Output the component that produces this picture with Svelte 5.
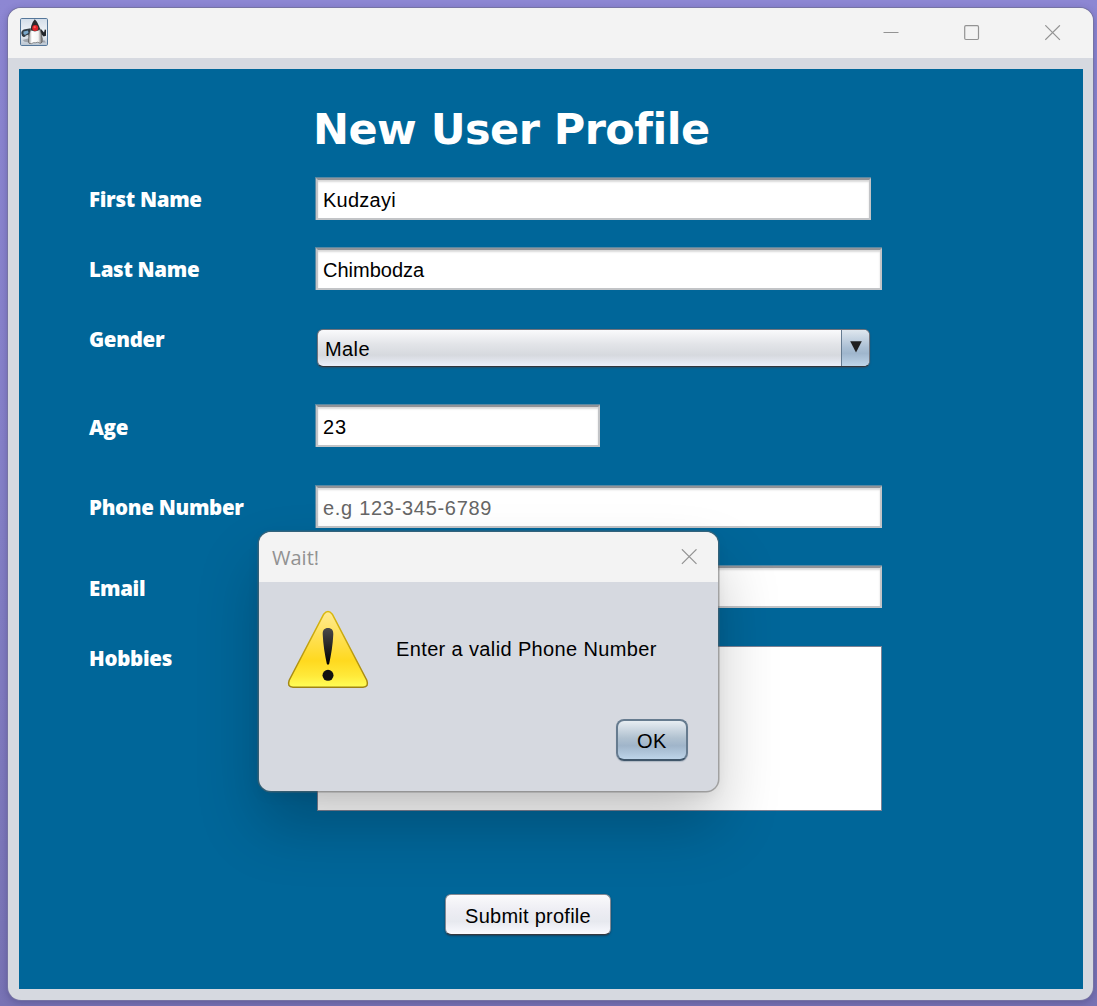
<script>
  let firstName = $state('Kudzayi');
  let lastName = $state('Chimbodza');
  let age = $state('23');
</script>

<div class="desktop">
  <main class="window">
    <header class="titlebar">
      <svg class="duke" viewBox="0 0 28 28" width="28" height="28">
        <defs>
          <linearGradient id="tile" x1="0" y1="0" x2="0" y2="1">
            <stop offset="0" stop-color="#d3dde9" />
            <stop offset=".55" stop-color="#f2f5f9" />
            <stop offset="1" stop-color="#b9c4d0" />
          </linearGradient>
          <linearGradient id="belly" x1="0" y1="0" x2="1" y2="0">
            <stop offset="0" stop-color="#8c8c8c" />
            <stop offset=".25" stop-color="#ffffff" />
            <stop offset=".7" stop-color="#f4f4f4" />
            <stop offset="1" stop-color="#666" />
          </linearGradient>
          <filter id="soft"><feGaussianBlur stdDeviation=".35" /></filter>
        </defs>
        <rect x=".5" y=".5" width="27" height="27" rx="1.2" fill="url(#tile)" stroke="#55779a" />
        <g filter="url(#soft)">
          <path d="M2.500 22l5.500-1.500 1.500 4-5-.8zM21 24.500l5 0-2-2.500z" fill="#8a8f95" opacity=".7" />
          <path d="M1.200 15q0-2.500 2.500-3.500l7-1.200 0 4-2.200 4-5 .7q-2-1-2.300-4z" fill="#303a43" />
          <path d="M3.500 13.500l4.500-1 .5 2.500-3.500 2-1.500-1z" fill="#79a6c8" />
          <path d="M5 18l3.500-1.500 0 2-2.500 1z" fill="#d7dde2" />
          <path d="M20.500 10.500l3.500 4 .8-3 1.200.3 0 6-2.300.7L21 16z" fill="#22262a" />
          <path d="M14.800 1.200q2.300 2 4.200 6.800l2 5.500-10.600.5.800-6q1.300-4.500 3.600-6.800z" fill="#2a2c2e" />
          <path d="M10.500 12q4.500 2.500 9.500-.5 1.800 4 2.300 9.500.3 4-1.500 4.300-2-.3-3-1.100-2 .8-4.500.5-1.500 1.500-4 .8-1.300-.5-.7-5.200.3-4.500 1.900-8.300z" fill="url(#belly)" stroke="#4c4c4c" stroke-width=".6" />
          <circle cx="15.200" cy="9.900" r="3" fill="#e0242a" />
          <circle cx="14.700" cy="9.200" r="1.100" fill="#ff5a50" />
        </g>
      </svg>
      <div class="controls">
        <svg viewBox="0 0 16 16" width="16" height="16"><path d="M.5 7.500h15" /></svg>
        <svg viewBox="0 0 16 16" width="16" height="16"><rect x=".7" y=".7" width="13.800" height="13.800" rx="1.200" /></svg>
        <svg viewBox="0 0 16 16" width="16" height="16"><path d="M.3.300l14.600 14.600M14.900.300L.3 14.900" /></svg>
      </div>
    </header>

    <form class="panel" onsubmit={(e) => e.preventDefault()}>
      <h1>New User Profile</h1>
      <div class="grid">
        <label class="upper" for="first">First Name</label>
        <input id="first" class="first" bind:value={firstName} />
        <label class="upper" for="last">Last Name</label>
        <input id="last" bind:value={lastName} />
        <label class="upper" for="gender">Gender</label>
        <button type="button" id="gender" class="combo">
          <span class="value">Male</span>
          <span class="arrow">
            <svg viewBox="0 0 12 12" width="12" height="12"><path d="M.2.200h11.600L6 11.500z" /></svg>
          </span>
        </button>
        <label for="age">Age</label>
        <input id="age" class="age" bind:value={age} />
        <label class="upper" for="phone">Phone Number</label>
        <input id="phone" placeholder="e.g 123-345-6789" />
        <label for="email">Email</label>
        <input id="email" />
        <label for="hobbies">Hobbies</label>
        <textarea id="hobbies"></textarea>
      </div>
      <button class="submit">Submit profile</button>
    </form>
  </main>

  <section class="dialog" role="alertdialog" aria-labelledby="dlg-title">
    <header class="dialog-bar">
      <span id="dlg-title">Wait!</span>
      <svg class="close" viewBox="0 0 16 16" width="16" height="16"><path d="M.9.300l14.600 14.600M15.500.300L.9 14.900" /></svg>
    </header>
    <div class="message">
      <svg viewBox="0 0 82 80" width="82" height="80">
        <defs>
          <linearGradient id="warn" x1="0" y1="0" x2="0" y2="1">
            <stop offset="0" stop-color="#ffeb94" />
            <stop offset=".35" stop-color="#ffe052" />
            <stop offset=".65" stop-color="#ffd91f" />
            <stop offset=".85" stop-color="#ffe93a" />
            <stop offset="1" stop-color="#ffff58" />
          </linearGradient>
          <linearGradient id="edge" x1="0" y1="0" x2="0" y2="1">
            <stop offset="0" stop-color="#dcb90c" />
            <stop offset="1" stop-color="#a08414" />
          </linearGradient>
          <linearGradient id="mark" x1="0" y1="0" x2="0" y2="1">
            <stop offset="0" stop-color="#4a4a4a" />
            <stop offset="1" stop-color="#000" />
          </linearGradient>
        </defs>
        <path d="M36.700 4.200Q41-1.200 45.300 4.200L79.800 70.200Q82.200 77 76 77.200H6Q-.2 77 2.200 70.200z" fill="url(#warn)" stroke="url(#edge)" stroke-width="1.500" />
        <path d="M41 18c3.600 0 5.500 2.200 5.300 6.200-.4 10-2.200 20.500-4.100 29.500q-1.200 2-2.400 0c-1.900-9-3.700-19.500-4.100-29.500-.2-4 1.700-6.200 5.300-6.200z" fill="url(#mark)" />
        <circle cx="41" cy="65.300" r="5.500" fill="#111" />
      </svg>
      <p>Enter a valid Phone Number</p>
    </div>
    <div class="actions"><button class="ok">OK</button></div>
  </section>
</div>

<style>
  :global(body) { margin: 0; overflow: hidden; }
  .desktop {
    position: relative;
    box-sizing: border-box;
    width: 1097px;
    height: 1006px;
    padding: 8px 4px 6px 8px;
    overflow: hidden;
    background: linear-gradient(#8d87d3, #8681c9 45%, #7873b4);
    font-family: 'Liberation Sans', Arial, sans-serif;
    font-size: 20px;
    color: #000;
  }
  .window {
    display: flex;
    flex-direction: column;
    height: 992px;
    border-radius: 13px;
    overflow: hidden;
    background: #d6d9e0;
    box-shadow: 0 0 0 1px #7673a4, 0 2px 7px 1px rgba(40, 35, 90, .3);
  }
  .titlebar {
    display: flex;
    justify-content: space-between;
    box-sizing: border-box;
    height: 50px;
    padding: 10px 32px 0 12px;
    background: #f3f3f3;
  }
  .duke { display: block; }
  .controls { display: flex; gap: 65px; padding-top: 7px; }
  .controls svg, .close { fill: none; stroke: #939393; stroke-width: 1.2; }
  .panel {
    display: flex;
    flex-direction: column;
    box-sizing: border-box;
    height: 920px;
    margin: 11px 10px 11px 11px;
    padding-left: 70px;
    background: #006699;
  }
  h1 {
    height: 60px;
    margin: 30px 0 19px 224px;
    font: bold 43px/60px 'DejaVu Sans', Verdana, sans-serif;
    letter-spacing: -.55px;
    color: #fff;
    white-space: nowrap;
  }
  .grid {
    display: grid;
    grid-template-columns: 227px 566px;
    grid-template-rows: 70px 70px 87px 81px 80px 70px 175px;
    align-items: start;
  }
  label {
    font: 800 20.5px/44px 'Open Sans', 'Noto Sans', sans-serif;
    letter-spacing: -.3px;
    color: #fff;
    white-space: nowrap;
  }
  .upper { line-height: 42px; }
  input {
    box-sizing: border-box;
    width: 566px;
    height: 42px;
    padding: 2px 5px 0;
    border: 2px solid #c2c4c7;
    border-top-color: #909398;
    border-radius: 0;
    outline: none;
    background: #fff;
    box-shadow: inset 0 2px 2px #d9d9d9, -.5px -.5px 0 .5px rgba(150, 160, 170, .6);
    font: inherit;
    color: #000;
  }
  input::placeholder { color: #666; opacity: 1; letter-spacing: .7px; }
  .first { width: 555px; letter-spacing: .25px; }
  .age { width: 284px; letter-spacing: 1px; }
  .combo {
    display: flex;
    box-sizing: border-box;
    width: 553px;
    height: 38px;
    margin: 10.500px 0 0 1px;
    padding: 0;
    border: 1px solid #70737c;
    border-bottom-color: #32363c;
    border-radius: 6px;
    overflow: hidden;
    background: linear-gradient(#fafafc, #e2e4e8 40%, #d6d9de 70%, #eceffa);
    box-shadow: 0 1px 2px #244f6d;
    font: inherit;
    color: #000;
    text-align: left;
  }
  .value { flex: 1; padding-left: 7px; line-height: 38px; letter-spacing: .4px; }
  .arrow {
    display: flex;
    box-sizing: border-box;
    width: 28px;
    padding: 11.500px 0 0 8px;
    border-left: 1px solid #647b91;
    background: linear-gradient(#dfe7ee, #a9bed3 50%, #9fb6cd 65%, #bfd5e9);
  }
  .arrow svg { fill: #202020; }
  textarea {
    display: block;
    box-sizing: border-box;
    width: 565px;
    height: 165px;
    margin: 10px 0 0 1px;
    padding: 6px;
    border: 1px solid #7c8294;
    border-radius: 0;
    outline: none;
    resize: none;
    background: #fff;
  }
  .submit {
    width: 166px;
    height: 41px;
    margin: 83px 0 0 356px;
    padding: 3px 0 0;
    border: 1px solid #858993;
    border-bottom-color: #353940;
    border-radius: 6px;
    background: linear-gradient(#fafafc, #ededf3 40%, #e7e9ef 68%, #fafaff);
    box-shadow: 0 1px 2px #173f5b;
    font: inherit;
    letter-spacing: .25px;
    color: #000;
  }
  /* Modal window floating over the form */
  .dialog {
    position: absolute;
    left: 259px;
    top: 532px;
    width: 459px;
    height: 259px;
    border-radius: 12px;
    background: #d6d9e0;
    box-shadow: 0 0 0 1.500px rgba(100, 100, 100, .5), 0 34px 62px rgba(0, 0, 0, .22), 0 4px 14px rgba(0, 0, 0, .06);
  }
  .dialog-bar {
    display: flex;
    justify-content: space-between;
    box-sizing: border-box;
    height: 50px;
    padding: 0 21px 0 13px;
    border-radius: 12px 12px 0 0;
    background: #f3f3f3;
    font: 20px/51px 'Open Sans', 'Noto Sans', sans-serif;
    color: #919191;
  }
  .close { margin-top: 17px; }
  .message { display: flex; gap: 27px; padding: 28px 0 0 28px; }
  .message p { margin: 28px 0 0; line-height: 23px; letter-spacing: .37px; white-space: nowrap; }
  .actions { display: flex; justify-content: flex-end; padding: 29px 30px 0 0; }
  .ok {
    width: 72px;
    height: 42px;
    padding: 3px 0 0;
    border: 2px solid #667b8f;
    border-bottom-color: #40566a;
    border-radius: 8px;
    background: linear-gradient(#e7edf2, #b0c1d0 45%, #a0b5ca 65%, #bdd4e9);
    box-shadow: 0 1px 1px #aeb7c3;
    font: inherit;
    letter-spacing: .5px;
    color: #000;
  }
</style>
